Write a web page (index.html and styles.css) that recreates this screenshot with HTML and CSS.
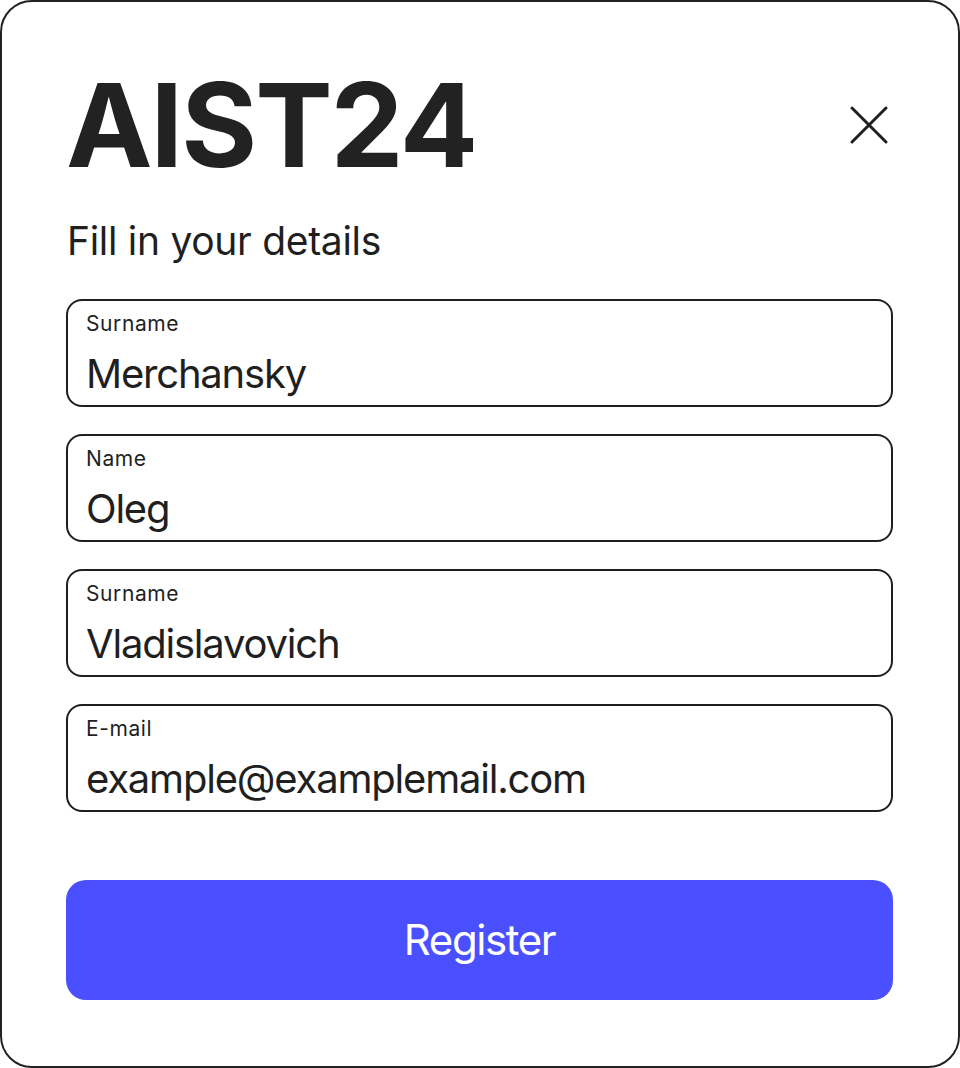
FILE: index.html
```html
<!DOCTYPE html>
<html lang="en">
<head>
    <meta charset="UTF-8">
    <meta name="viewport" content="width=device-width, initial-scale=1.0">
    <title>AIST24 - Register</title>
    <link rel="stylesheet" href="styles.css">
</head>
<body>
    <div id="modal">
        <div class="header">
            <h1>AIST24</h1>
            <button class="close-btn" aria-label="Close">
                <svg width="40" height="40" viewBox="0 0 40 40">
                    <path d="M3 3 L37 37 M37 3 L3 37" stroke="#1f1f1f" stroke-width="3" stroke-linecap="round" fill="none"/>
                </svg>
            </button>
        </div>

        <p class="subtitle">Fill in your details</p>

        <form class="fields">
            <label class="field">
                <span class="field-label">Surname</span>
                <input type="text" value="Merchansky">
            </label>
            <label class="field">
                <span class="field-label">Name</span>
                <input type="text" value="Oleg">
            </label>
            <label class="field">
                <span class="field-label">Surname</span>
                <input type="text" value="Vladislavovich">
            </label>
            <label class="field">
                <span class="field-label">E-mail</span>
                <input type="email" value="example@examplemail.com">
            </label>

            <button type="button" class="btn">Register</button>
        </form>
    </div>
</body>
</html>
```

FILE: styles.css
```css
/* General */
* {
    box-sizing: border-box;
}

body {
    font-family: Inter, "Noto Sans", sans-serif;
    background-color: white;
    margin: 0;
    padding: 0;
    color: #1f1f1f;
}

#modal {
    width: 960px;
    height: 1068px;
    border: 2px solid #222;
    border-radius: 32px;
    padding: 65px 65px 0 64px;
    background-color: white;
}

.header {
    display: flex;
    justify-content: space-between;
    align-items: center;
}

h1 {
    margin: 0;
    font-size: 116px;
    line-height: 1;
    font-weight: 700;
    letter-spacing: -2px;
    color: #222;
}

.close-btn {
    background: none;
    border: none;
    padding: 0;
    margin-right: 4px;
    cursor: pointer;
    display: flex;
}

.subtitle {
    margin: 38px 0 0 1px;
    font-size: 39px;
    line-height: 1;
    letter-spacing: -0.3px;
}

.fields {
    margin-top: 39px;
    display: flex;
    flex-direction: column;
    gap: 27px;
}

.field {
    display: flex;
    flex-direction: column;
    height: 108px;
    border: 2px solid #1f1f1f;
    border-radius: 16px;
    padding: 12px 18px 0;
}

.field-label {
    font-size: 21px;
    line-height: 1;
    letter-spacing: 0.6px;
}

.field input {
    margin-top: 15px;
    border: none;
    outline: none;
    padding: 0;
    font-family: inherit;
    font-size: 40px;
    line-height: 1;
    letter-spacing: -1.2px;
    color: #1f1f1f;
    background: transparent;
}

.btn {
    margin-top: 41px;
    height: 120px;
    padding: 0;
    display: flex;
    align-items: center;
    justify-content: center;
    border: none;
    border-radius: 20px;
    background-color: #4a50ff;
    color: white;
    font-family: inherit;
    font-size: 42px;
    line-height: 1;
    letter-spacing: -1.4px;
    cursor: pointer;
}
```
